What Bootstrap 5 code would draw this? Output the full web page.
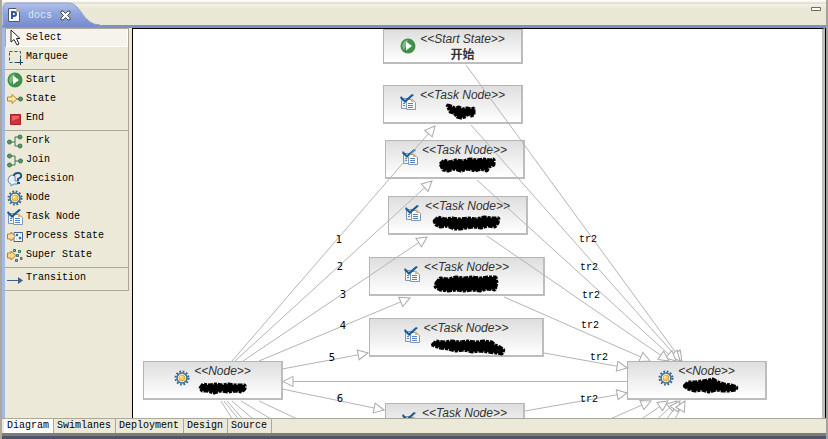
<!DOCTYPE html>
<html lang="en">
<head>
<meta charset="utf-8">
<meta name="viewport" content="width=device-width, initial-scale=1">
<title>docs</title>
<link href="https://cdn.jsdelivr.net/npm/bootstrap@5.3.0/dist/css/bootstrap.min.css" rel="stylesheet">
<style>
:root { --cream:#ece9d8; --line:#aca899; --mono:"Liberation Mono","Noto Sans CJK SC",monospace; }
body { background:var(--cream); font-family:var(--mono); font-size:10px; line-height:19px; color:#000; }
svg { display:block; flex:none; }
.defs { width:0; height:0; position:absolute; }
.ide { border-right:2px solid #a3a29c; border-left:2px solid #a9a99f; }
.titlebar { height:28px; background:linear-gradient(#fff 0,#f6f4ea 2px,#d5d2c2 3px,#f3f1e4 4px,#eae7d7 9px); border-bottom:3px solid #7b8fc8; }
.titlebar .filetab { position:relative; width:98px; height:28px; padding:2px 0 0 6px; color:#dfe6f8; z-index:1; }
.filetab .shape { position:absolute; left:0; top:0; z-index:-1; }
.filetab button, .winbtn { background:none; border:0; padding:0; }
.winbtn { margin:6px 4px 0 0; }
.workarea { border-left:3px solid #a6b9e4; }
.palette { width:127px; }
.palette section { padding-bottom:3px; border-bottom:1px solid var(--line); border-right:1px solid var(--line); width:124px; }
.tool { height:19px; width:100%; border:0; background:none; padding:0 0 0 2px; gap:3px; text-align:left; line-height:19px; }
.tool.active { background:#f5f3ea; box-shadow:inset 1px 1px #aca899, inset -1px -1px #fff; }
.canvas { background:#fff; border-left:1px solid #000; border-top:1px solid #000; border-right:3px solid #bdbdb9; }
.gutter { border-right:1px solid #000; }
.wires { position:absolute; left:0; top:0; }
.wires .edge { stroke:#b4b4b4; fill:none; }
.wires .edge path { marker-end:url(#arrow); }
.wires .edge .plain { marker-end:none; }
.wires text { font-size:10px; fill:#000; text-anchor:middle; }
.wires .num text { font-family:"DejaVu Sans",sans-serif; }
.gnode { position:absolute; width:140px; height:39px; border:1px solid #b5b5b5; border-right:2px solid #bdbdbd; border-bottom:2px solid #bdbdbd; background:linear-gradient(#dedede,#fff); color:#333; font:italic 12px/16px "Liberation Sans",Arial,sans-serif; gap:4px; padding-top:1px; }
.gnode svg { margin-top:7px; }
.gnode b { font-style:normal; font-family:"Liberation Sans","Noto Sans CJK SC",sans-serif; }
.n-start { left:250px; top:0; height:35px; }
.n-t1 { left:250px; top:56px; }
.n-t2 { left:252px; top:111px; }
.n-t3 { left:255px; top:167px; }
.n-t4 { left:236px; top:228px; width:176px; }
.n-t5 { left:236px; top:289px; width:175px; }
.n-t6 { left:252px; top:374px; }
.n-l { left:10px; top:332px; }
.n-r { left:494px; top:332px; }
.pages { border-top:1px solid var(--line); line-height:14px; padding-left:2px; }
.pages button { border:0; border-right:1px solid var(--line); background:none; padding:0 4px 0 3px; line-height:14px; }
.pages button.active { background:#fff; }
.bottomedge { height:6px; border-top:3px solid #7d7d78; background:#4d546c; }
</style>
<script src="https://cdn.jsdelivr.net/npm/bootstrap@5.3.0/dist/js/bootstrap.bundle.min.js"></script>
</head>
<body>
<svg class="defs" aria-hidden="true">
  <symbol id="i-start" viewBox="0 0 16 16"><circle cx="8" cy="8" r="7.500" fill="#3f9148"/><path d="M3 5A6 6 0 0 1 8 2Q6 5 6 8L4 12Q1 9 3 5" fill="#7dbd7c"/><path d="M6 3.500L12 8L6 12.500Z" fill="#fff"/></symbol>
  <symbol id="i-task" viewBox="0 0 16 16"><path d="M1.500 4.500H8V14.500H1.500Z" fill="#eef3fb" stroke="#8196b4"/><path d="M6.500 5.500H12L15.500 8.500V15.500H6.500Z" fill="#f9fbff" stroke="#8196b4"/><path d="M11 4L15 8H11Z" fill="#e2b46c"/><path d="M3 9.500H5M3 11.500H5M8 9.500H13M8 11.500H13M8 13.500H13" stroke="#5580c2"/><path d="M1 2L5 6L12 0L14 1L5 9L0 4Z" fill="#1b5d92"/></symbol>
  <symbol id="i-node" viewBox="0 0 16 16"><circle cx="8" cy="8" r="6.500" fill="none" stroke="#2f6590" stroke-width="2" stroke-dasharray="1.700 1.700"/><circle cx="8" cy="8" r="5" fill="#f7f5d7" stroke="#3b6f9c" stroke-width="1.500"/><circle cx="8" cy="8" r="3" fill="#f5c65c" stroke="#dda447"/><circle cx="7" cy="7" r="1.500" fill="#fbe69e"/></symbol>
  <marker id="arrow" viewBox="-11 -6 12 12" refX="0" refY="0" markerWidth="12" markerHeight="12" orient="auto" markerUnits="userSpaceOnUse"><path d="M0 0L-10 -5V5Z" fill="#fff" stroke="#aaa"/></marker>
</svg>

<div class="ide vh-100 d-flex flex-column overflow-hidden">
  <header class="titlebar d-flex justify-content-between align-items-start">
    <div class="filetab d-flex align-items-center">
      <svg class="shape" width="98" height="28" viewBox="0 0 98 28" aria-hidden="true"><defs><linearGradient id="tabfill" x2="0" y2="1"><stop stop-color="#b3c1e8"/><stop offset=".4" stop-color="#91a6de"/><stop offset="1" stop-color="#7488cb"/></linearGradient></defs><path d="M1 28V8Q1 3 6 3H67Q73 3 79 12Q87 25 98 25V28Z" fill="url(#tabfill)" stroke="#8da0d5"/></svg>
      <svg width="12" height="14" viewBox="0 0 12 14" aria-hidden="true"><path d="M.5.5H8L11.500 4V13.500H.5Z" fill="#fff" stroke="#557"/><path d="M8 0V4H12Z" fill="#d7bd68"/><path d="M4 11V4H6Q8 4 8 6T6 8H4" fill="none" stroke="#2a5b9c" stroke-width="2"/></svg>
      <span class="ms-1 ps-1">docs</span>
      <button type="button" class="ms-1 ps-1" aria-label="Close"><svg width="11" height="11" viewBox="0 0 11 11"><path d="M1 1H3L5.500 3.500L8 1H10V3L7.500 5.500L10 8V10H8L5.500 7.500L3 10H1V8L3.500 5.500L1 3Z" fill="#fff" stroke="#4b4b4b"/></svg></button>
    </div>
    <button type="button" class="winbtn" aria-label="Minimize"><svg width="11" height="6" viewBox="0 0 11 6"><path d="M.5 1.500H9.500V4.500H.5Z" fill="#fff" stroke="#6d6a5a"/></svg></button>
  </header>

  <main class="workarea flex-grow-1 d-flex overflow-hidden">
    <nav class="palette flex-shrink-0" aria-label="Palette">
      <section>
        <button class="tool active d-flex align-items-center"><svg width="16" height="17" viewBox="0 0 16 17"><path d="M4 1V13L7 10.500L10 16L12 15L9.500 9.500H13Z" fill="#fff" stroke="#222"/></svg>Select</button>
        <button class="tool d-flex align-items-center"><svg width="16" height="16" viewBox="0 0 16 16"><path d="M2.500 2.500H13.500V13.500H2.500Z" fill="none" stroke="#2c5a60" stroke-dasharray="3 2"/><path d="M10 13.500H16M13.500 10V16" stroke="#173b50"/></svg>Marquee</button>
      </section>
      <section>
        <button class="tool d-flex align-items-center"><svg width="16" height="16"><use href="#i-start"/></svg>Start</button>
        <button class="tool d-flex align-items-center"><svg width="16" height="16" viewBox="0 0 16 16"><path d="M.5 6H5V3.500L10 8L5 12.500V10H.5Z" fill="#fbe7a2" stroke="#b58a31"/><path d="M10 8H12" stroke="#555"/><circle cx="13.500" cy="8" r="2" fill="#4f9a63" stroke="#337249"/></svg>State</button>
        <button class="tool d-flex align-items-center"><svg width="16" height="16" viewBox="0 0 16 16"><path d="M3.500 4.500H13.500V14.500H3.500Z" fill="#d92c33" stroke="#a3242c"/><path d="M5 6H12V8L5 11Z" fill="#ef6368"/></svg>End</button>
      </section>
      <section>
        <button class="tool d-flex align-items-center"><svg width="16" height="16" viewBox="0 0 16 16"><path d="M4 9H8M13 4H8V13H13" fill="none" stroke="#446e58"/><g fill="#529b63" stroke="#3a7650"><circle cx="2.500" cy="9" r="2"/><circle cx="13" cy="4" r="2"/><circle cx="13" cy="13" r="2"/></g></svg>Fork</button>
        <button class="tool d-flex align-items-center"><svg width="16" height="16" viewBox="0 0 16 16"><path d="M3 4H8V13H3M8 9H13" fill="none" stroke="#446e58"/><g fill="#529b63" stroke="#3a7650"><circle cx="2.500" cy="4" r="2"/><circle cx="2.500" cy="13" r="2"/><circle cx="13.500" cy="9" r="2"/></g></svg>Join</button>
        <button class="tool d-flex align-items-center"><svg width="16" height="16" viewBox="0 0 16 16"><path d="M5 4Q1 5 1 9Q1 12 4 13V15L7 13H11V10H8V5Z" fill="#e9f2fb" stroke="#5f8fb7"/><path d="M7 5Q7 2 11 2Q15 2 14 6Q13 7 11 8V10M10 12H13" fill="none" stroke="#1d5689" stroke-width="2"/></svg>Decision</button>
        <button class="tool d-flex align-items-center"><svg width="16" height="16"><use href="#i-node"/></svg>Node</button>
        <button class="tool d-flex align-items-center"><svg width="16" height="16"><use href="#i-task"/></svg>Task Node</button>
        <button class="tool d-flex align-items-center"><svg width="16" height="16" viewBox="0 0 16 16"><path d="M7 4.500H15.500V13.500H7Z" fill="#fff" stroke="#3c6798"/><path d="M9 6H11V8H9ZM12 9H14V11H12ZM13 6H14M9 11H10" fill="#3a6ea4" stroke="#3a6ea4" stroke-width=".5"/><path d="M.5 6H4V4L8 8.500L4 13V11H.5Z" fill="#fbe0a0" stroke="#bb8128"/></svg>Process State</button>
        <button class="tool d-flex align-items-center"><svg width="16" height="16" viewBox="0 0 16 16"><path d="M.5 6H4V4L9 8.500L4 13V11H.5Z" fill="#fbd98a" stroke="#bb8128"/><g fill="#8cb9c4" stroke="#39706d"><path d="M6.500 2.500H8.500V4.500H6.500ZM11.500 3.500H13.500V5.500H11.500ZM9.500 7.500H11.500V9.500H9.500ZM13.500 10.500H15V12.500H13.500ZM8.500 12.500H10.500V14.500H8.500Z"/></g></svg>Super State</button>
      </section>
      <section>
        <button class="tool d-flex align-items-center"><svg width="16" height="16" viewBox="0 0 16 16"><path d="M0 10.500H13" stroke="#3b6388"/><path d="M11 7L16 10.500L11 14Z" fill="#3b6388"/></svg>Transition</button>
      </section>
    </nav>

    <div class="gutter flex-grow-1 d-flex">
    <div class="canvas flex-grow-1 position-relative overflow-hidden">
      <div class="gnode n-start d-flex justify-content-center"><svg width="16" height="16"><use href="#i-start"/></svg><div class="text-center">&lt;&lt;Start State&gt;&gt;<br><b>开始</b></div></div>
      <div class="gnode n-t1 d-flex justify-content-center"><svg width="16" height="16"><use href="#i-task"/></svg><div>&lt;&lt;Task Node&gt;&gt;</div></div>
      <div class="gnode n-t2 d-flex justify-content-center"><svg width="16" height="16"><use href="#i-task"/></svg><div>&lt;&lt;Task Node&gt;&gt;</div></div>
      <div class="gnode n-t3 d-flex justify-content-center"><svg width="16" height="16"><use href="#i-task"/></svg><div>&lt;&lt;Task Node&gt;&gt;</div></div>
      <div class="gnode n-t4 d-flex justify-content-center"><svg width="16" height="16"><use href="#i-task"/></svg><div>&lt;&lt;Task Node&gt;&gt;</div></div>
      <div class="gnode n-t5 d-flex justify-content-center"><svg width="16" height="16"><use href="#i-task"/></svg><div>&lt;&lt;Task Node&gt;&gt;</div></div>
      <div class="gnode n-t6 d-flex justify-content-center"><svg width="16" height="16"><use href="#i-task"/></svg><div>&lt;&lt;Task Node&gt;&gt;</div></div>
      <div class="gnode n-l d-flex justify-content-center"><svg width="16" height="16"><use href="#i-node"/></svg><div>&lt;&lt;Node&gt;&gt;</div></div>
      <div class="gnode n-r d-flex justify-content-center"><svg width="16" height="16"><use href="#i-node"/></svg><div>&lt;&lt;Node&gt;&gt;</div></div>

      <svg class="wires" width="690" height="420" viewBox="133 29 690 420">
        <g class="edge">
          <path d="M232 361L435 126"/><path d="M235 361L432 181"/><path d="M243 361L427 237"/><path d="M259 361L410 298"/><path d="M282 369L368 353"/><path d="M282 389L384 410"/>
          <path d="M627 381.500H283"/>
          <path d="M466 65L682 361"/><path d="M471 125L680 361"/><path d="M477 180L676 361"/><path d="M487 236L669 361"/><path d="M504 297L650 361"/><path d="M544 353L627 368"/><path d="M525 411L627 393"/>
          <path d="M608 420L651 401"/><path d="M640 420L668 401"/><path d="M652 424L677 401"/><path d="M663 424L680 401"/><path d="M672 424L685 401"/>
          <path class="plain" d="M221 401L236 425M224 401L243 425M227 401L248 425M232 401L260 425M241 401L281 425M259 401L310 425"/>
        </g>
        <g stroke="#000" stroke-width="3" fill="#000" stroke-linejoin="bevel" stroke-dasharray="5 1 3 1">
          <path d="M447 105L451 106L455 108L459 107L463 109L467 108L471 109L474 108V115L471 116L468 114L465 117L461 118L457 117L454 113L450 112Z"/>
          <path d="M440 164L444 160L450 162L456 160L463 161L470 159L477 160L484 159L490 160L494 159V165L489 167L487 171L481 169L475 171L468 169L461 171L454 169L448 171L443 170Z"/>
          <path d="M434 221L438 217L445 219L452 218L460 219L468 218L476 219L484 217L492 218L499 218L498 223L495 227L488 226L481 228L474 227L466 228L460 229L454 229L447 226L440 227L436 225Z"/>
          <path d="M436 283L440 278L448 279L456 277L464 278L472 277L480 278L488 277L496 277L497 283L495 290L488 289L480 291L472 290L464 291L456 290L448 291L440 290L435 287Z"/>
          <path d="M432 345L436 341L444 342L452 341L460 342L468 341L476 342L484 341L492 342L495 345L500 347L504 350L502 354L496 353L488 352L480 351L472 352L464 350L456 351L448 349L440 348Z"/>
          <path d="M200 388L203 384L209 385L216 384L222 385L229 384L235 385L241 385L245 385V389L242 392L235 391L228 392L221 391L214 393L207 391L202 391Z"/>
          <path d="M684 386L688 382L695 382L702 381L708 380L713 379L718 382L724 384L731 385L737 387L736 390L730 391L723 391L716 390L709 392L702 390L695 391L688 389Z"/>
        </g>
        <g class="num">
          <text x="339" y="243">1</text><text x="340" y="270">2</text><text x="343" y="298">3</text><text x="343" y="329">4</text><text x="332" y="361">5</text><text x="340" y="402">6</text>
        </g>
        <g>
          <text x="588" y="242">tr2</text><text x="589" y="270">tr2</text><text x="591" y="298">tr2</text><text x="590" y="328">tr2</text><text x="599" y="360">tr2</text><text x="589" y="402">tr2</text>
        </g>
      </svg>
    </div>
    </div>
  </main>

  <footer>
    <div class="pages d-flex">
      <button class="active">Diagram</button><button>Swimlanes</button><button>Deployment</button><button>Design</button><button>Source</button>
    </div>
    <div class="bottomedge"></div>
  </footer>
</div>
</body>
</html>
